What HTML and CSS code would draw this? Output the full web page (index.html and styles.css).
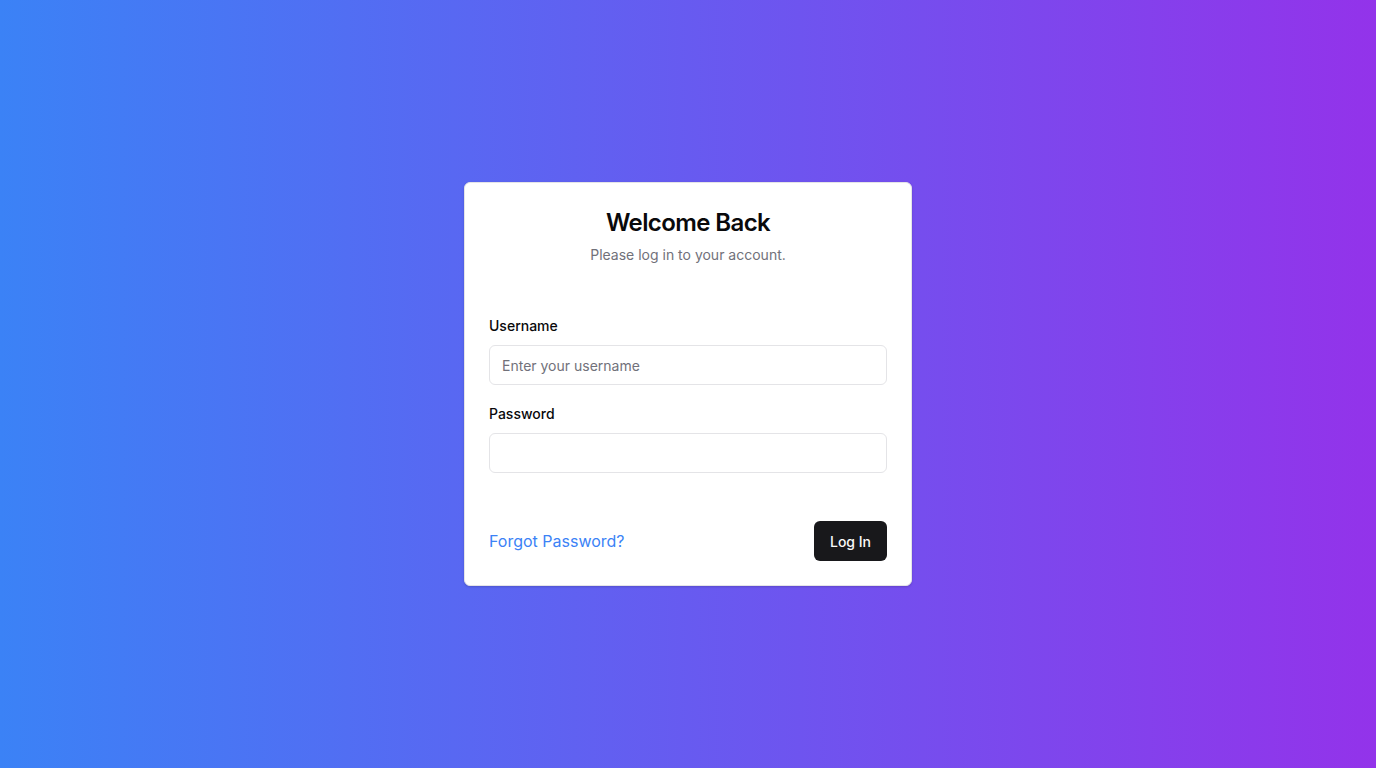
FILE: index.html
```html
<!DOCTYPE html>
<html lang="en">
<head>
<meta charset="utf-8">
<title>Login</title>
<link rel="stylesheet" href="styles.css">
</head>
<body>
<main class="page">
  <form class="card" onsubmit="return false;">
    <div class="card-header">
      <h1 class="title">Welcome Back</h1>
      <p class="subtitle">Please log in to your account.</p>
    </div>
    <div class="fields">
      <div class="field">
        <label class="label" for="username">Username</label>
        <input class="input" id="username" type="text" placeholder="Enter your username">
      </div>
      <div class="field">
        <label class="label" for="password">Password</label>
        <input class="input" id="password" type="password">
      </div>
    </div>
    <div class="actions">
      <a class="link" href="#">Forgot Password?</a>
      <button class="button" type="submit">Log In</button>
    </div>
  </form>
</main>
</body>
</html>
```

FILE: styles.css
```css
* { box-sizing: border-box; }
html, body { margin: 0; padding: 0; }
body {
  font-family: Inter, "Noto Sans", "Liberation Sans", sans-serif;
  color: #09090b;
  background: linear-gradient(to right, #3b82f6, #9333ea);
  min-height: 100vh;
}
.page {
  min-height: 100vh;
  display: flex;
  align-items: center;
  justify-content: center;
}
.card {
  width: 448px;
  background: #ffffff;
  border: 1px solid #e4e4e7;
  border-radius: 6px;
  padding: 24px;
  box-shadow: 0 1px 3px rgba(0,0,0,0.1), 0 1px 2px rgba(0,0,0,0.06);
  display: flex;
  flex-direction: column;
}
.card-header {
  display: flex;
  flex-direction: column;
  align-items: center;
  gap: 6px;
}
.title {
  margin: 0;
  font-size: 24px;
  line-height: 32px;
  font-weight: 600;
  letter-spacing: -0.6px;
  color: #09090b;
}
.subtitle {
  margin: 0;
  font-size: 14px;
  line-height: 20px;
  color: #71717a;
}
.fields {
  margin-top: 50px;
  display: flex;
  flex-direction: column;
  gap: 18px;
}
.field {
  display: flex;
  flex-direction: column;
}
.label {
  font-size: 14px;
  line-height: 20px;
  font-weight: 500;
  color: #09090b;
  padding-top: 1px;
  margin-bottom: 9px;
}
.input {
  height: 40px;
  width: 100%;
  border: 1px solid #e4e4e7;
  border-radius: 6px;
  padding: 0 12px;
  font-family: inherit;
  font-size: 14px;
  color: #09090b;
  background: #fff;
  outline: none;
}
.input::placeholder { color: #71717a; }
.actions {
  margin-top: 48px;
  display: flex;
  align-items: center;
  justify-content: space-between;
}
.link {
  font-size: 16px;
  line-height: 24px;
  color: #3b82f6;
  text-decoration: none;
}
.button {
  height: 40px;
  padding: 0 16px;
  border: none;
  border-radius: 6px;
  background: #18181b;
  color: #fafafa;
  font-family: inherit;
  font-size: 14px;
  font-weight: 500;
  cursor: pointer;
}
```
